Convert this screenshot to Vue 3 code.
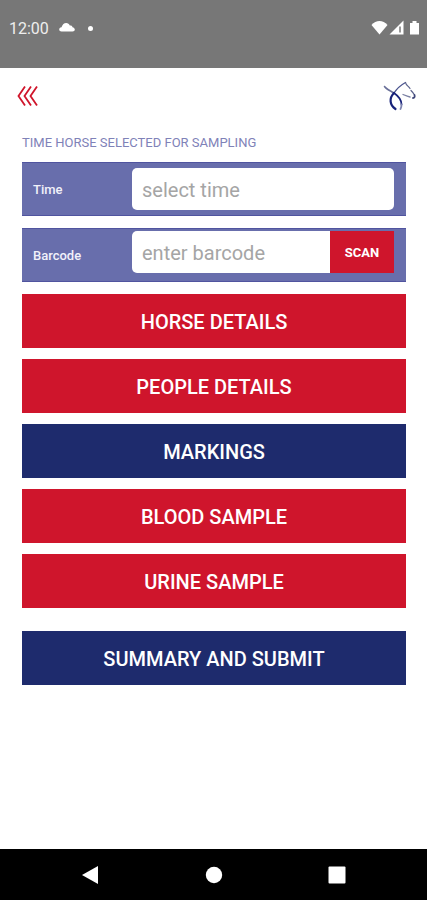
<template>
  <div class="screen">
    <div class="status-bar">
      <div class="status-group">
        <span class="clock">12:00</span>
        <svg class="cloud" width="16" height="12" viewBox="0 0 16 12" aria-hidden="true">
          <path d="M2.500 9.500C1.200 9.500.2 8.800.2 7.600c0-1.300.8-2 2.300-2.300C3.500 2.500 5 1 7.200 1c1.800 0 3 1 3.600 2.500 1.500-.2 2.500.5 2.700 1.700 1.400.4 2.300 1.200 2.300 2.400 0 1.200-.9 1.900-2.300 1.900z" fill="#fff" />
        </svg>
        <span class="status-dot"></span>
      </div>
      <svg width="50" height="18" viewBox="0 0 50 18" aria-hidden="true">
        <path d="M0.500 6C5 .8 12 .8 16.500 6L8.500 15.500z" fill="#fff" />
        <path d="M32.500 1.500V15.500H18.500z" fill="#fff" />
        <path d="M29 7.500v6" stroke="#777" stroke-width="1.500" />
        <path d="M39 4h2.500V2h4v2H48V15.500h-9z" fill="#fff" />
      </svg>
    </div>

    <header class="app-header">
      <button class="btn-back" type="button" aria-label="Back">
        <svg width="22" height="22" viewBox="0 0 22 22" fill="none" stroke="#d0152b" stroke-width="1.800">
          <path d="M8 1.500 1.500 11 8 20.500M14 1.500 7.500 11 14 20.500M20 1.500 13.500 11 20 20.500" />
        </svg>
      </button>
      <svg width="34" height="32" viewBox="0 0 34 32" fill="none" stroke-linecap="round" aria-hidden="true">
        <path d="M2.500 6.500C4 9 8 10.500 12 13" stroke="#6a7099" stroke-width="1.500" />
        <path d="M12 13C15 8.500 19 5 23.500 2.500" stroke="#4a538e" stroke-width="1.300" />
        <path d="M23.500 2.500C24 5.500 26.500 6 28 8.500M29 10.500C30.500 12 31.500 13 32.500 15" stroke="#5c638c" stroke-width="1.200" />
        <path d="M32.500 15c.5 1.500 0 3-1.500 3" stroke="#3f477a" stroke-width="1.800" />
        <path d="M28 17C26 16.500 23.500 15.500 21 14.500" stroke="#7b80a3" stroke-width="1.300" />
        <path d="M12 13C7 18 7.500 25 13.500 29" stroke="#17227a" stroke-width="2.200" />
        <path d="M12 13C17 16.500 19.500 20 19.500 24.500" stroke="#17227a" stroke-width="1.800" />
        <path d="M19.500 24.500C19.500 26 19.500 27.500 18.500 29" stroke="#7d84b0" stroke-width="1.800" />
      </svg>
    </header>

    <main class="content">
      <h1 class="section-title">TIME HORSE SELECTED FOR SAMPLING</h1>

      <div class="fields">
        <div class="field">
          <label for="time">Time</label>
          <div class="control">
            <input id="time" v-model="time" type="text" placeholder="select time" />
          </div>
        </div>
        <div class="field">
          <label for="barcode">Barcode</label>
          <div class="control with-action">
            <input id="barcode" v-model="barcode" type="text" placeholder="enter barcode" />
            <button class="btn-scan" type="button">SCAN</button>
          </div>
        </div>
      </div>

      <nav class="sections">
        <button
          v-for="section in sections"
          :key="section.label"
          type="button"
          class="btn"
          :class="{ done: section.done }"
        >
          {{ section.label }}
        </button>
      </nav>

      <button class="btn done btn-submit" type="button">SUMMARY AND SUBMIT</button>
    </main>

    <div class="nav-bar">
      <button type="button" aria-label="Back">
        <svg width="18" height="20" viewBox="0 0 18 20"><path d="M16 1v18L0 10z" fill="#fff" /></svg>
      </button>
      <button type="button" aria-label="Home">
        <svg width="18" height="18" viewBox="0 0 18 18"><circle cx="9" cy="9" r="8.200" fill="#fff" /></svg>
      </button>
      <button type="button" aria-label="Recent apps">
        <svg width="18" height="18" viewBox="0 0 18 18"><rect x="0.500" y="0.500" width="17" height="17" rx="1" fill="#fff" /></svg>
      </button>
    </div>
  </div>
</template>

<script setup>
import { ref } from 'vue'

const time = ref('')
const barcode = ref('')

const sections = [
  { label: 'HORSE DETAILS', done: false },
  { label: 'PEOPLE DETAILS', done: false },
  { label: 'MARKINGS', done: true },
  { label: 'BLOOD SAMPLE', done: false },
  { label: 'URINE SAMPLE', done: false },
]
</script>

<style>
body {
  margin: 0;
  background: #fff;
}
</style>

<style scoped>
.screen {
  display: flex;
  flex-direction: column;
  min-height: 100vh;
  font-family: Roboto, 'Liberation Sans', sans-serif;
}

button {
  border: none;
  padding: 0;
  font-family: inherit;
  cursor: pointer;
}

svg {
  display: block;
}

/* Status bar */
.status-bar {
  display: flex;
  align-items: center;
  justify-content: space-between;
  box-sizing: border-box;
  height: 68px;
  padding: 0 6px 12px 9px;
  background: #777;
  color: #fff;
}

.status-group {
  display: flex;
  align-items: center;
}

.clock {
  font-size: 16px;
  color: #eee;
}

.cloud {
  margin-left: 10px;
}

.status-dot {
  width: 5px;
  height: 5px;
  margin-left: 13px;
  border-radius: 50%;
  background: #fff;
}

/* Header */
.app-header {
  display: flex;
  align-items: center;
  justify-content: space-between;
  height: 56px;
  padding: 0 11px 0 17px;
}

.btn-back {
  background: none;
}

/* Form */
.content {
  flex: 1;
  padding: 8px 21px 24px 22px;
}

.section-title {
  margin: 0 0 8px;
  font-size: 13px;
  font-weight: 400;
  line-height: 22px;
  color: #7f82b8;
}

.fields {
  display: flex;
  flex-direction: column;
  gap: 12px;
  margin-bottom: 12px;
}

.field {
  display: flex;
  align-items: center;
  box-sizing: border-box;
  height: 54px;
  padding: 0 12px 0 11px;
  border-top: 1px solid #50549f;
  border-bottom: 1px solid #50549f;
  background: #686eac;
}

.field label {
  width: 99px;
  font-size: 13px;
  font-weight: 500;
  color: #f1f1fa;
}

.control {
  display: flex;
  flex: 1;
  min-width: 0;
  height: 42px;
}

.control input {
  flex: 1;
  min-width: 0;
  box-sizing: border-box;
  padding: 2px 10px 0;
  border: none;
  border-radius: 5px;
  background: #fff;
  font-family: inherit;
  font-size: 20px;
  color: #333;
}

.control input::placeholder {
  color: #a5a5a5;
  opacity: 1;
}

.with-action {
  margin-bottom: 6px;
}

.with-action input {
  border-radius: 5px 0 0 5px;
}

.btn-scan {
  width: 64px;
  background: #cf152c;
  color: #fff;
  font-size: 13px;
  font-weight: 700;
}

/* Section buttons */
.sections {
  display: flex;
  flex-direction: column;
  gap: 11px;
}

.btn {
  width: 100%;
  height: 54px;
  padding-top: 2px;
  background: #cf152c;
  color: #fff;
  font-size: 20px;
  font-weight: 500;
}

.btn.done {
  background: #1e2b6d;
}

.btn-submit {
  margin-top: 23px;
}

/* System navigation */
.nav-bar {
  display: flex;
  align-items: center;
  justify-content: center;
  gap: 105px;
  height: 51px;
  background: #000;
}

.nav-bar button {
  background: none;
}
</style>
